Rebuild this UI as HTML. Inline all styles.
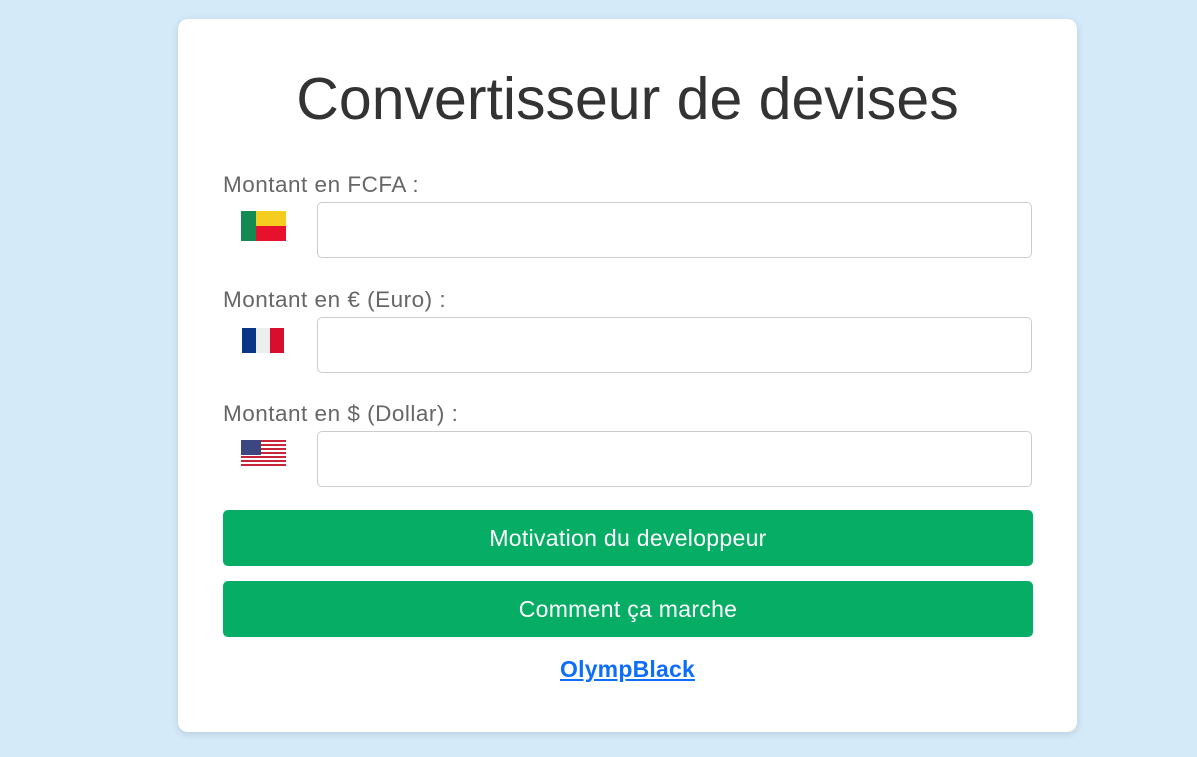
<!DOCTYPE html>
<html><head><style>
body{margin:0;background:#d4eaf9;font-family:"Liberation Sans",Arial,sans-serif;width:1197px;height:757px;overflow:hidden;position:relative}
.card{position:absolute;left:178px;top:19px;width:899px;height:713px;background:#fff;border-radius:10px;box-shadow:0 2px 8px rgba(0,0,0,.12)}
h1{position:absolute;left:0;right:0;top:45px;margin:0;text-align:center;font-weight:normal;font-size:59px;color:#333;line-height:70px}
.lbl{position:absolute;left:45px;font-size:22.5px;letter-spacing:0.5px;color:#666;line-height:24px}
.inp{position:absolute;left:139px;width:713px;height:54px;border:1px solid #ccc;border-radius:5px}
.btn{position:absolute;left:45px;width:810px;height:56px;background:#06ad64;border-radius:5px;color:#fff;font-size:23px;letter-spacing:0.3px;text-align:center;line-height:56px}
a{position:absolute;left:0;right:0;top:637px;text-align:center;color:#0d6efd;font-weight:bold;font-size:23px;letter-spacing:0.2px;text-decoration:underline}
.f{position:absolute}
</style></head><body>
<div class="card">
<h1>Convertisseur de devises</h1>
<div class="lbl" style="top:154px">Montant en FCFA :</div>
<div class="f" style="left:63px;top:192px;width:45px;height:30px;background:linear-gradient(to right,#138a51 0 15px,transparent 15px),linear-gradient(#f5cd1f 0 15px,#e8112d 15px)"></div>
<div class="inp" style="top:183px"></div>
<div class="lbl" style="top:269px">Montant en € (Euro) :</div>
<div class="f" style="left:64px;top:309px;width:42px;height:25px;background:linear-gradient(to right,#0a3785 0 14px,#eee 14px 28px,#d80f2c 28px)"></div>
<div class="inp" style="top:298px"></div>
<div class="lbl" style="top:383px">Montant en $ (Dollar) :</div>
<div class="f" style="left:63px;top:421px;width:45px;height:28px;background:repeating-linear-gradient(#c8253a 0 2px,#fff 2px 4px)"><div style="width:20px;height:15px;background:#3c4680"></div></div>
<div class="inp" style="top:412px"></div>
<div class="btn" style="top:491px">Motivation du developpeur</div>
<div class="btn" style="top:562px">Comment ça marche</div>
<a>OlympBlack</a>
</div>
</body></html>
